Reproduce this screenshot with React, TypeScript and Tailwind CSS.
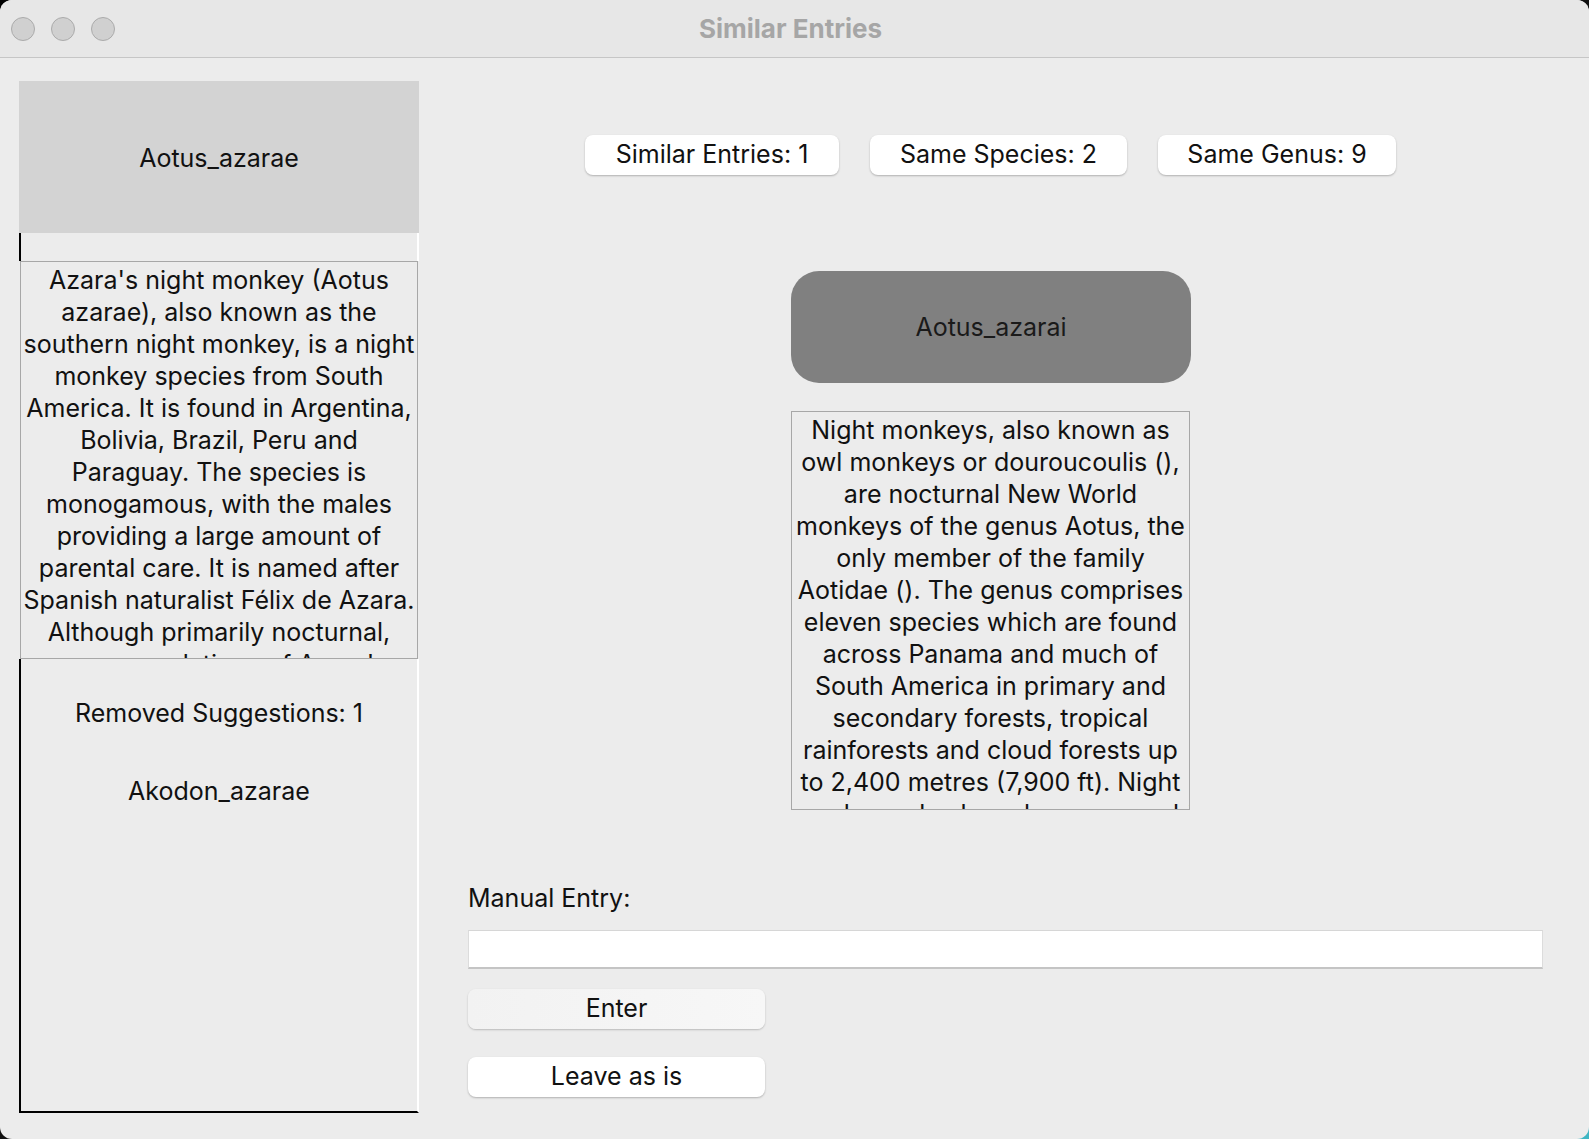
import React from "react";

const LEFT_TEXT = [
  "Azara's night monkey (Aotus",
  "azarae), also known as the",
  "southern night monkey, is a night",
  "monkey species from South",
  "America. It is found in Argentina,",
  "Bolivia, Brazil, Peru and",
  "Paraguay. The species is",
  "monogamous, with the males",
  "providing a large amount of",
  "parental care. It is named after",
  "Spanish naturalist Félix de Azara.",
  "Although primarily nocturnal,",
  "some populations of Azara's",
];

const RIGHT_TEXT = [
  "Night monkeys, also known as",
  "owl monkeys or douroucoulis (),",
  "are nocturnal New World",
  "monkeys of the genus Aotus, the",
  "only member of the family",
  "Aotidae (). The genus comprises",
  "eleven species which are found",
  "across Panama and much of",
  "South America in primary and",
  "secondary forests, tropical",
  "rainforests and cloud forests up",
  "to 2,400 metres (7,900 ft). Night",
  "monkeys also have large eyes which",
];

const COUNTS = [
  { label: "Similar Entries: 1", w: "w-[254px]" },
  { label: "Same Species: 2", w: "w-[257px]" },
  { label: "Same Genus: 9", w: "w-[238px]" },
];

const TextBox: React.FC<{ lines: string[]; className: string }> = ({ lines, className }) => (
  <div className={`border border-[#a7a7a7] overflow-hidden pt-[2px] text-center text-[25px] leading-[32px] text-[#111] ${className}`}>
    {lines.map((l) => (
      <div key={l} className="whitespace-nowrap">{l}</div>
    ))}
  </div>
);

const App: React.FC = () => {
  return (
    <div
      className="w-[1589px] h-[1139px] bg-gradient-to-br from-black via-[#111] to-[#3fb7c4] overflow-hidden"
      style={{ fontFamily: "Inter, 'Liberation Sans', sans-serif" }}
    >
      <div className="w-full h-full rounded-[12px] overflow-hidden bg-[#ececec] flex flex-col">
        {/* Title bar */}
        <div className="h-[58px] shrink-0 bg-[#e7e7e7] border-b border-[#c6c6c6] flex items-center">
          <div className="w-[200px] flex items-center gap-[16px] pl-[11px]">
            {[0, 1, 2].map((i) => (
              <div key={i} className="w-[24px] h-[24px] rounded-full bg-[#d0d0d0] border border-[#ababab]" />
            ))}
          </div>
          <div className="flex-1 text-center text-[26px] font-bold text-[#a6a6a6] pr-[8px]">Similar Entries</div>
          <div className="w-[200px]" />
        </div>

        {/* Body */}
        <div className="flex-1 flex pt-[23px] pl-[19px] pb-[26px]">
          {/* Left column */}
          <div className="w-[400px] flex flex-col text-[#111]">
            <div className="h-[152px] bg-[#d3d3d3] flex items-center justify-center text-[25px] pt-[3px]">
              Aotus_azarae
            </div>
            <div className="h-[28px] border-l-2 border-l-black border-r-2 border-r-white" />
            <TextBox lines={LEFT_TEXT} className="h-[398px] w-[398px] ml-[1px]" />
            <div className="flex-1 border-l-2 border-l-black border-b-2 border-b-black border-r-2 border-r-white text-center text-[25px] leading-[32px] pt-[38px]">
              <div>Removed Suggestions: 1</div>
              <div className="mt-[46px]">Akodon_azarae</div>
            </div>
          </div>

          {/* Right column */}
          <div className="ml-[49px] flex flex-col text-[#111]">
            <div className="mt-[54px] ml-[117px] flex gap-[31px]">
              {COUNTS.map((c) => (
                <div
                  key={c.label}
                  className={`${c.w} h-[40px] bg-white rounded-[8px] shadow-[0_1px_2px_rgba(0,0,0,0.25)] flex items-center justify-center text-[25px]`}
                >
                  {c.label}
                </div>
              ))}
            </div>

            <div className="mt-[96px] ml-[323px] w-[400px] h-[112px] rounded-[28px] bg-[#808080] flex items-center justify-center text-[25px] text-[#1a1a1a] pt-[2px]">
              Aotus_azarai
            </div>

            <TextBox lines={RIGHT_TEXT} className="mt-[28px] ml-[323px] w-[399px] h-[399px]" />

            <div className="mt-[72px] text-[25px] leading-[32px]">Manual Entry:</div>
            <div className="mt-[16px] w-[1075px] h-[39px] bg-white border-t border-t-[#d6d6d6] border-b-2 border-b-[#c4c4c4] border-x border-x-[#dcdcdc]" />

            <div className="mt-[20px] w-[297px] h-[40px] rounded-[8px] bg-gradient-to-r from-[#f2f2f2] to-[#f7f7f7] shadow-[0_1px_2px_rgba(0,0,0,0.22)] flex items-center justify-center text-[25px]">
              Enter
            </div>
            <div className="mt-[28px] w-[297px] h-[40px] rounded-[8px] bg-white shadow-[0_1px_2px_rgba(0,0,0,0.25)] flex items-center justify-center text-[25px]">
              Leave as is
            </div>
          </div>
        </div>
      </div>
    </div>
  );
};

export default App;
